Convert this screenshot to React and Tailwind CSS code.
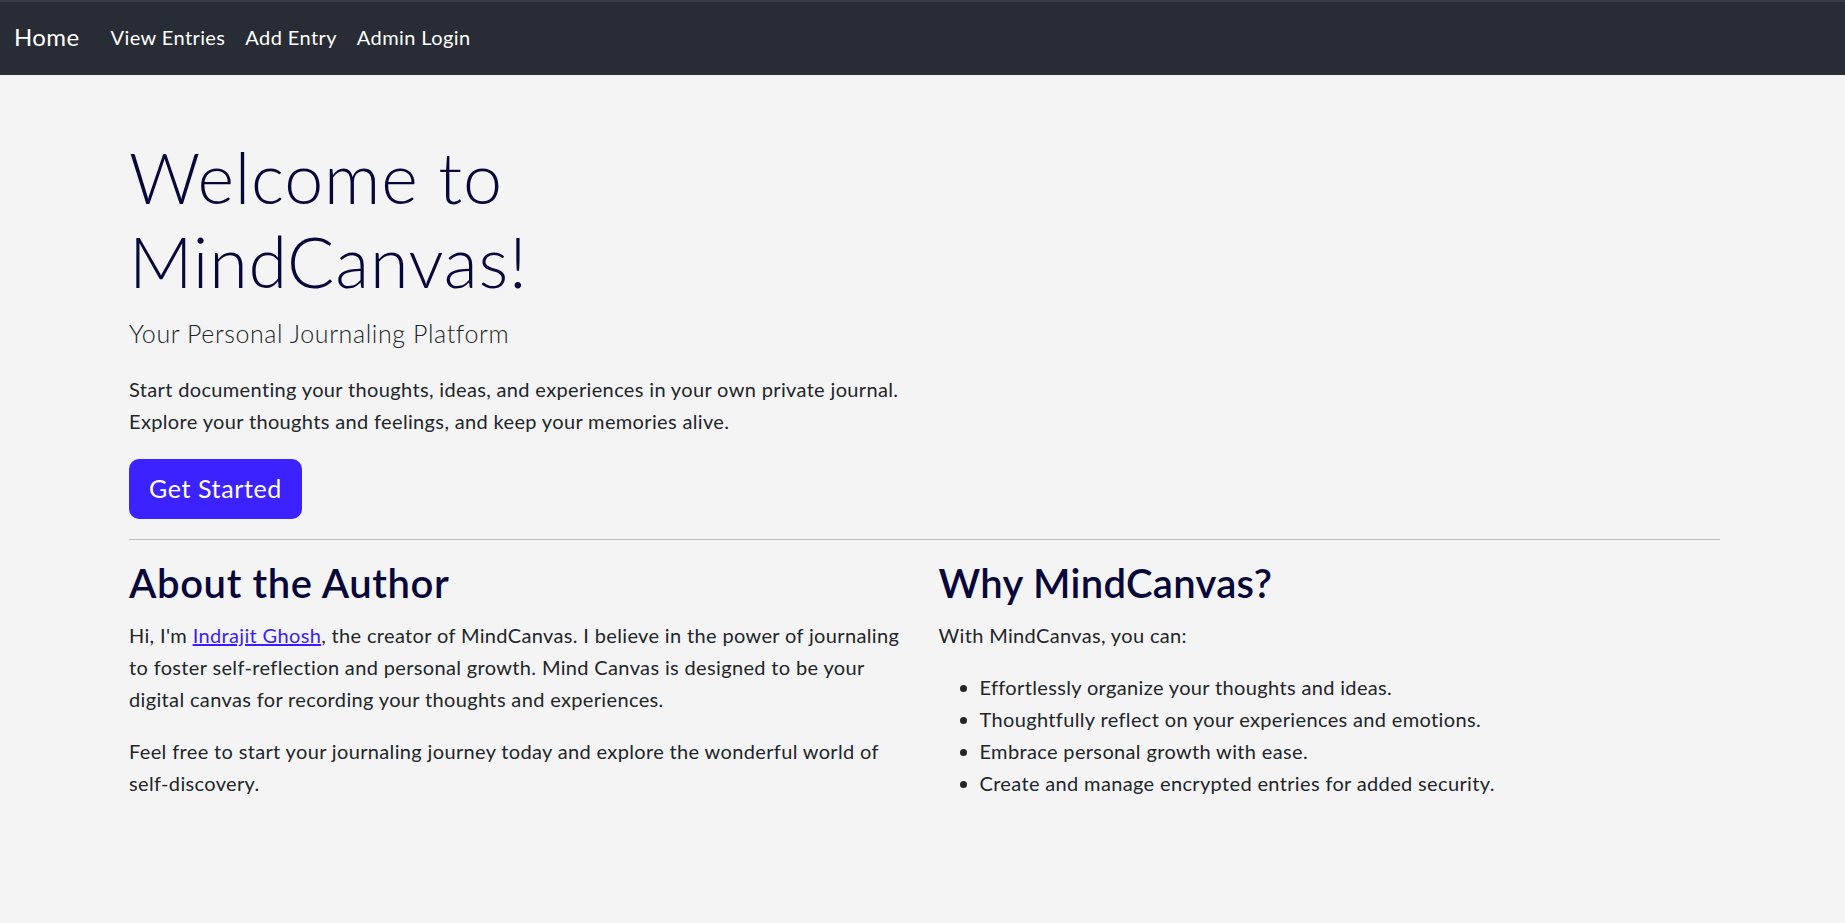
import React from "react";

const navLinks = ["View Entries", "Add Entry", "Admin Login"];

const reasons = [
  "Effortlessly organize your thoughts and ideas.",
  "Thoughtfully reflect on your experiences and emotions.",
  "Embrace personal growth with ease.",
  "Create and manage encrypted entries for added security.",
];

function Navbar() {
  return (
    <nav className="h-[75px] bg-[#282c34] border-t-2 border-[#393c42] flex items-center px-[14px] pb-[4px]">
      <a href="#" className="text-[24px] text-white mr-[21px] leading-none tracking-[0.4px]">
        Home
      </a>
      <div className="flex items-center">
        {navLinks.map((label) => (
          <a
            key={label}
            href="#"
            className="px-[10px] text-[20px] text-white leading-none tracking-[0.4px]"
          >
            {label}
          </a>
        ))}
      </div>
    </nav>
  );
}

export default function App() {
  return (
    <div
      className="min-h-screen bg-[#f4f4f4] text-[#212529] tracking-[0.35px]"
      style={{ fontFamily: "Lato, 'Noto Sans', sans-serif" }}
    >
      <Navbar />

      <main className="mx-[129px] pt-[60px]">
        {/* Hero */}
        <section>
          <h1 className="text-[70px] font-light leading-[84px] text-[#07073a] mb-[10px] tracking-[0.8px]">
            Welcome to
            <br />
            MindCanvas!
          </h1>
          <p className="text-[25px] font-light leading-[40px] mb-[20px] tracking-[0.6px]">
            Your Personal Journaling Platform
          </p>
          <p className="text-[20px] leading-[32px] mb-[22px]">
            Start documenting your thoughts, ideas, and experiences in your own private journal.
            <br />
            Explore your thoughts and feelings, and keep your memories alive.
          </p>
          <a
            href="#"
            className="inline-flex items-center h-[60px] px-[20px] rounded-[10px] bg-[#3b22ff] text-white text-[25px] tracking-[0.6px]"
          >
            Get Started
          </a>
        </section>

        <hr className="mt-[20px] border-t border-[#bdbdbd] w-[1591px]" />

        {/* About / Why */}
        <section className="grid grid-cols-2 gap-x-[28px] w-[1591px] pt-[19px]">
          <div>
            <h2 className="text-[40px] font-semibold leading-[48px] text-[#07073a] mb-[12px] tracking-[0.6px]">
              About the Author
            </h2>
            <p className="text-[20px] leading-[32px] mb-[20px]">
              Hi, I'm{" "}
              <a href="#" className="text-[#3a1cff] underline">
                Indrajit Ghosh
              </a>
              , the creator of MindCanvas. I believe in the power of journaling to foster
              self-reflection and personal growth. Mind Canvas is designed to be your digital
              canvas for recording your thoughts and experiences.
            </p>
            <p className="text-[20px] leading-[32px]">
              Feel free to start your journaling journey today and explore the wonderful world of
              self-discovery.
            </p>
          </div>
          <div>
            <h2 className="text-[40px] font-semibold leading-[48px] text-[#07073a] mb-[12px] tracking-[0.3px]">
              Why MindCanvas?
            </h2>
            <p className="text-[20px] leading-[32px] mb-[20px]">With MindCanvas, you can:</p>
            <ul className="list-disc pl-[41px] text-[20px] leading-[32px]">
              {reasons.map((r) => (
                <li key={r}>{r}</li>
              ))}
            </ul>
          </div>
        </section>
      </main>
    </div>
  );
}
